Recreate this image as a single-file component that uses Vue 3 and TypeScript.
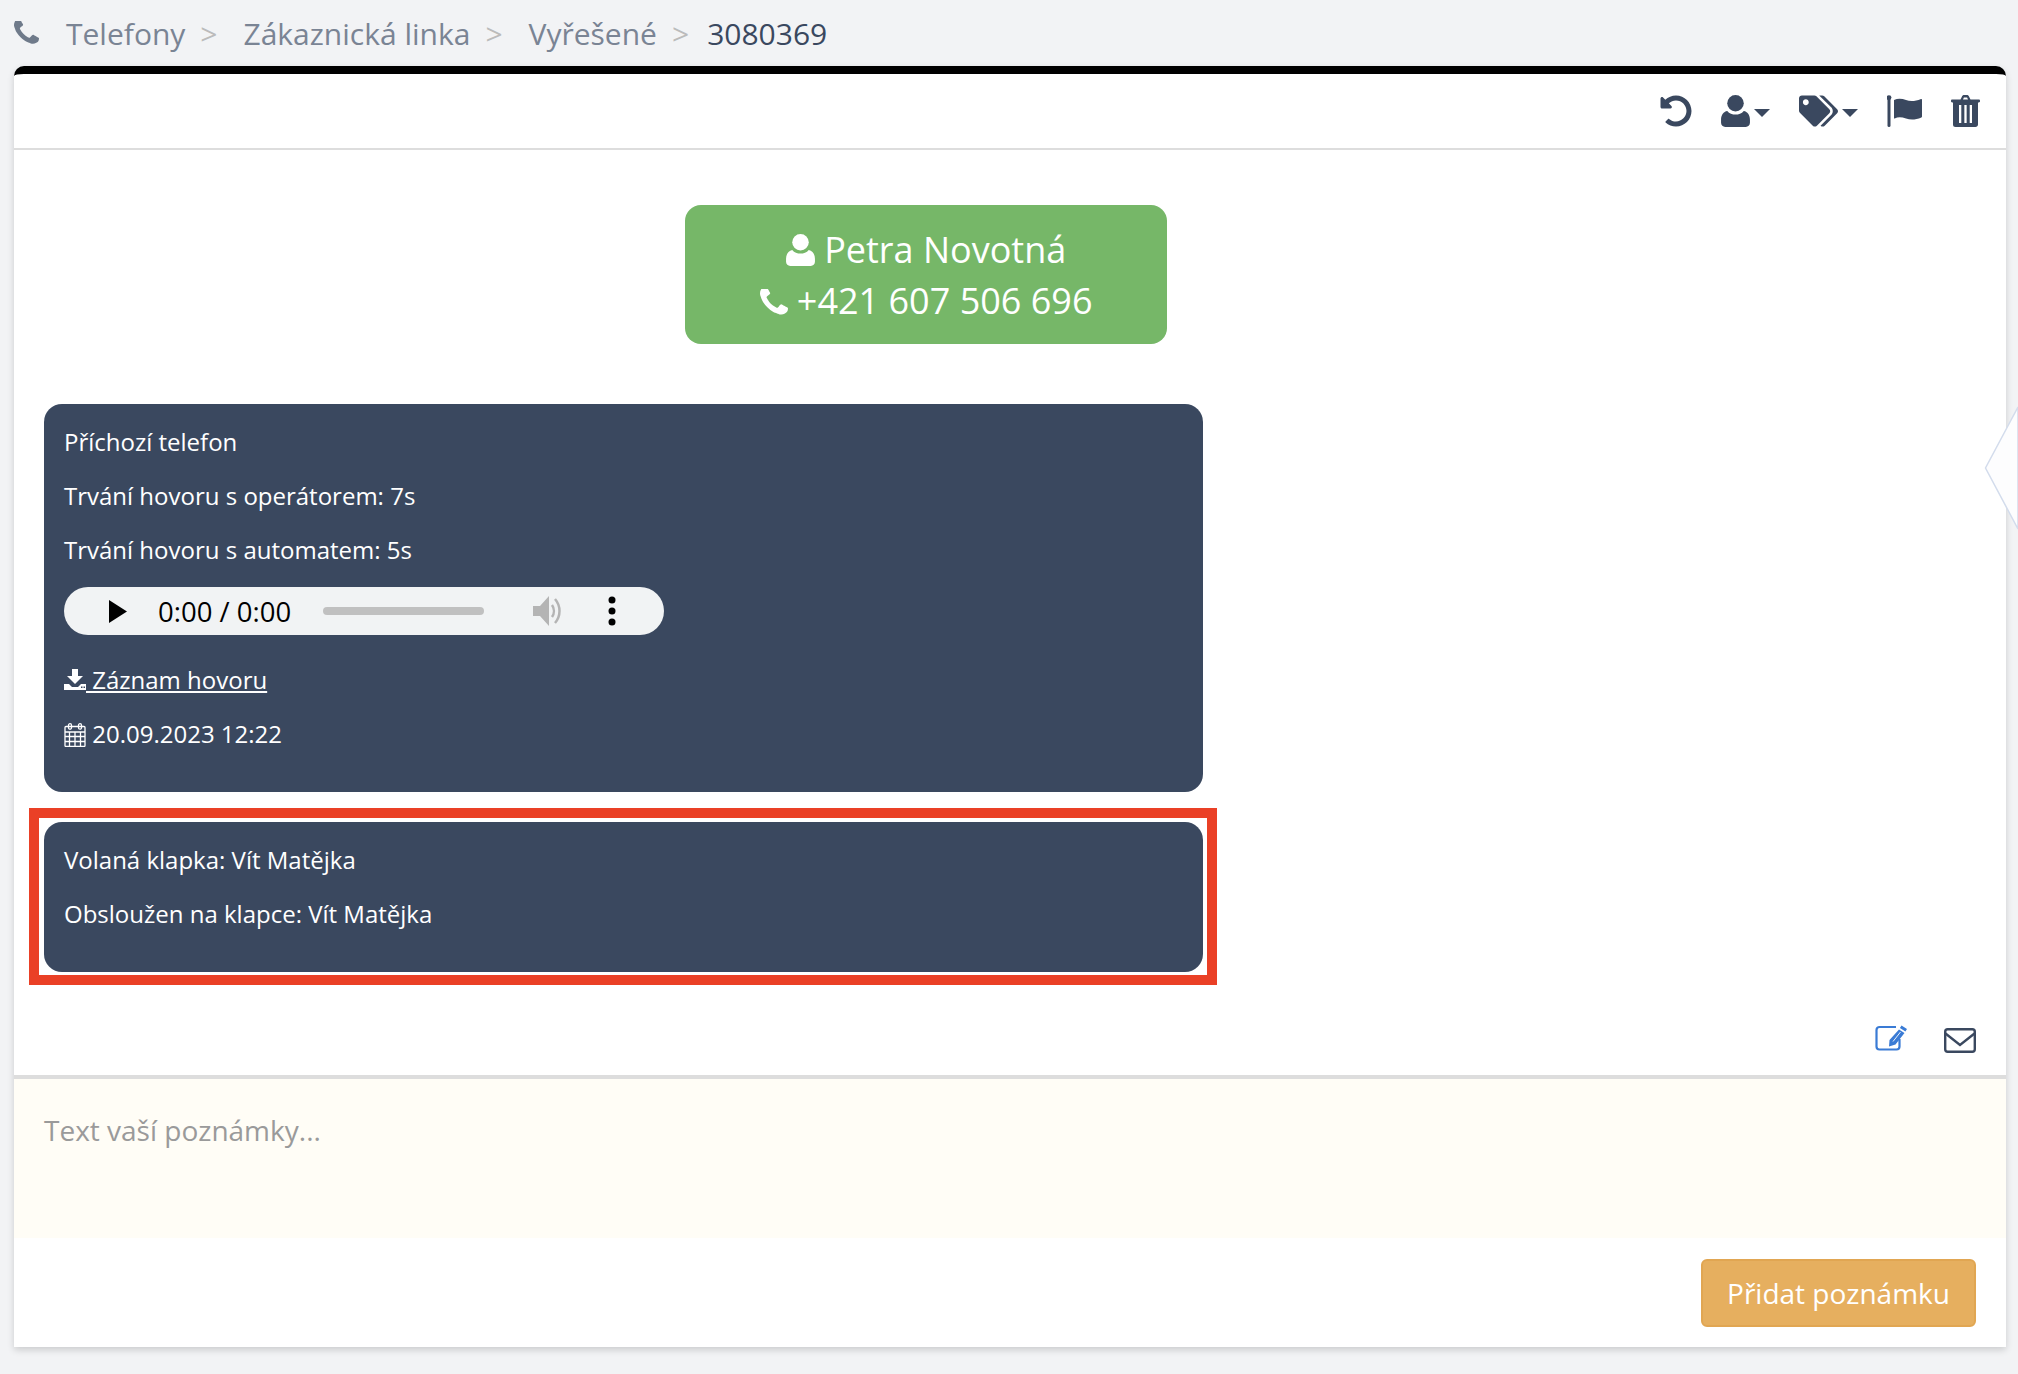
<script setup lang="ts">
const crumbs: string[] = ['Telefony', 'Zákaznická linka', 'Vyřešené']
const phone = 'M1600 1240q0 27-10 70.5t-21 68.5q-21 50-122 106-94 51-186 51-27 0-53-3.5t-57.5-12.5-47-14.5-55.5-20.5-49-18q-98-35-175-83-127-79-264-216t-216-264q-48-77-83-175-3-9-18-49t-20.5-55.5-14.5-47-12.5-57.5-3.5-53q0-92 51-186 56-101 106-122 25-11 68.5-21t70.5-10q14 0 21 3 18 6 53 76 11 19 30 54t35 63.5 31 53.5q3 4 17.5 25t21.5 35.5 7 28.5q0 20-28.5 50t-62 55-62 53-28.5 46q0 9 5 22.5t8.5 20.5 14 24 11.5 19q76 137 174 235t235 174q2 1 19 11.5t24 14 20.5 8.5 22.5 5q18 0 46-28.5t53-62 55-62 50-28.5q14 0 28.5 7t35.5 21.5 25 17.5q25 15 53.5 31t63.5 35 54 30q70 35 76 53 3 7 3 21z'
const body = 'M6 15.500C8 18 11 19 14 19s6-1 8-3.500C25.500 16 28 19.500 28 24v3c0 2.500-2 4-4 4H4c-2 0-4-1.500-4-4v-3c0-4.500 2.500-8 6-8.500z'
</script>

<template>
  <div class="page">
    <nav class="crumbs">
      <svg class="crumb-phone" viewBox="192 256 1408 1408"><path :d="phone" /></svg>
      <template v-for="c in crumbs" :key="c">
        <span class="crumb">{{ c }}</span>
        <span class="sep">&gt;</span>
      </template>
      <span class="crumb-last">3080369</span>
    </nav>

    <main class="card">
      <header class="toolbar">
        <svg class="ic-undo" viewBox="0 0 512 512"><path d="M255.545 8c-66.269.119-126.438 26.233-170.86 68.685L48.971 40.971C33.851 25.851 8 36.559 8 57.941V192c0 13.255 10.745 24 24 24h134.059c21.382 0 32.09-25.851 16.971-40.971l-41.75-41.75c30.864-28.899 70.801-44.907 113.23-45.273 92.398-.798 170.283 73.977 169.484 169.442C423.236 348.009 349.816 424 256 424c-41.127 0-79.997-14.678-110.63-41.556-4.743-4.161-11.906-3.908-16.368.553L89.34 422.659c-4.872 4.872-4.631 12.815.482 17.433C133.798 479.813 192.074 504 256 504c136.966 0 247.999-111.033 248-247.998C504.001 119.193 392.354 7.755 255.545 8z" /></svg>
        <div class="drop">
          <svg class="ic-user" viewBox="0 0 28 31"><circle cx="14" cy="8" r="8" /><path :d="body" /></svg>
          <span class="caret"></span>
        </div>
        <div class="drop">
          <svg class="ic-tags" viewBox="0 0 640 512"><path d="M497.941 225.941L286.059 14.059A48 48 0 0 0 252.118 0H48C21.49 0 0 21.49 0 48v204.118a48 48 0 0 0 14.059 33.941l211.882 211.882c18.744 18.745 49.136 18.746 67.882 0l204.118-204.118c18.745-18.745 18.745-49.137 0-67.882zM112 160c-26.51 0-48-21.49-48-48s21.49-48 48-48 48 21.49 48 48-21.49 48-48 48zm513.941 133.823L421.823 497.941c-18.745 18.745-49.137 18.745-67.882 0l-.36-.36L527.64 323.522c16.999-16.999 26.36-39.6 26.36-63.64s-9.362-46.641-26.36-63.64L331.397 0h48.721a48 48 0 0 1 33.941 14.059l211.882 211.882c18.745 18.745 18.745 49.137 0 67.882z" /></svg>
          <span class="caret"></span>
        </div>
        <svg class="ic-flag" viewBox="0 0 35 32">
          <rect x="0.5" y="2" width="3" height="30" rx="1.5" />
          <circle cx="2" cy="2.6" r="2.4" />
          <path d="M7 5c4-2 8-1.500 12 0s9 1.500 15-1c.6-.2 1 .1 1 .7V21.500c0 .5-.2.8-.6 1-6 2.500-11 2.500-15.400 1s-8-1.800-11.300 0c-.4.2-.7 0-.7-.5V5.600c0-.3 0-.5 0-.6z" />
        </svg>
        <svg class="ic-trash" viewBox="0 0 29 32">
          <path fill-rule="evenodd" d="M9.500 4.500 11 1.400C11.400.6 12.100 0 13 0h3c.9 0 1.600.6 2 1.400l1.500 3.100h8.300c.7 0 1.200.5 1.200 1.200v.6c0 .7-.5 1.200-1.200 1.200H27v22c0 1.400-1.100 2.500-2.500 2.500h-20A2.500 2.500 0 0 1 2 29.500v-22h-.8C.5 7.500 0 7 0 6.300v-.6c0-.7.5-1.200 1.200-1.200zM12 4.500h5l-.9-2h-3.200zM8 10h2.300v18H8zM13.350 10h2.300v18h-2.300zM18.700 10H21v18h-2.300z" />
        </svg>
      </header>

      <section class="thread">
        <div class="contact">
          <div><svg class="ct-user" viewBox="0 0 28 31"><circle cx="14" cy="8" r="8" /><path :d="body" /></svg> Petra Novotná</div>
          <div><svg class="ct-phone" viewBox="192 256 1408 1408"><path :d="phone" /></svg> +421 607 506 696</div>
        </div>

        <article class="msg">
          <p>Příchozí telefon</p>
          <p>Trvání hovoru s operátorem: 7s</p>
          <p>Trvání hovoru s automatem: 5s</p>
          <div class="player">
            <svg class="pl-play" viewBox="0 0 18 23"><path d="M0 0 18 11.500 0 23z" /></svg>
            <span class="pl-time">0:00 / 0:00</span>
            <span class="pl-bar"></span>
            <svg class="pl-vol" viewBox="0 0 29 30">
              <path fill="#b4b4b4" d="M0 10h7l9-10v30L7 20H0z" />
              <path fill="none" stroke="#b4b4b4" stroke-width="2.500" d="M19 9c2.500 3.500 2.500 8.500 0 12" />
              <path fill="none" stroke="#b4b4b4" stroke-width="2.500" d="M22 3c6 7 6 17 0 24" />
            </svg>
            <svg class="pl-more" viewBox="0 0 8 30">
              <circle cx="4" cy="4" r="3.500" /><circle cx="4" cy="15" r="3.500" /><circle cx="4" cy="26" r="3.500" />
            </svg>
          </div>
          <p>
            <a class="rec">
              <svg class="ic-dl" viewBox="0 0 22 21">
                <path d="M8 0h6v7h5l-8 8-8-8h5z" />
                <path fill-rule="evenodd" d="M0 15h5l3 3h6l3-3h5v6H0zM17 17.500h1.500v1.500H17zM19.500 17.500H21v1.500h-1.500z" />
              </svg>
              Záznam hovoru
            </a>
          </p>
          <p class="date">
            <svg class="ic-cal" viewBox="0 0 22 24">
              <g fill="none" stroke="#fff" stroke-width="1.300">
                <rect x="1" y="3.500" width="20" height="20" rx="1" />
                <path d="M1 9h20M1 13.500h20M1 18.500h20M5.500 9v14.500M11 9v14.500M16.500 9v14.500" />
                <rect x="4.500" y="0.700" width="3" height="5.500" rx="1.500" />
                <rect x="14.500" y="0.700" width="3" height="5.500" rx="1.500" />
              </g>
            </svg>
            20.09.2023 12:22
          </p>
        </article>

        <article class="msg second">
          <p>Volaná klapka: Vít Matějka</p>
          <p>Obsloužen na klapce: Vít Matějka</p>
          <div class="highlight"></div>
        </article>

        <div class="actions">
          <svg class="ic-edit" viewBox="0 0 32 26">
            <path fill="none" stroke="#3a7bd5" stroke-width="2.200" d="M21 2H4.500A3 3 0 0 0 1.500 5v16.500a3 3 0 0 0 3 3h17a3 3 0 0 0 3-3V14" />
            <path fill="#3a7bd5" d="M26.500.5 32 4l-1.600 2.600-5.500-3.500zM24 4.500l5.500 3.500-9 11.500-6.500 2 .5-6.500z" />
            <path fill="none" stroke="#fff" stroke-width="0.900" d="M25.500 7 18 16.500" />
          </svg>
          <svg class="ic-mail" viewBox="0 0 32 25">
            <rect x="1.200" y="1.200" width="29.600" height="22.600" rx="2.500" fill="none" stroke="#3a485f" stroke-width="2.400" />
            <path d="M1.500 5.500 16 17 30.500 5.500" fill="none" stroke="#3a485f" stroke-width="2.400" />
          </svg>
        </div>
      </section>

      <textarea class="note" placeholder="Text vaší poznámky..."></textarea>
      <footer class="foot">
        <button class="submit" type="button">Přidat poznámku</button>
      </footer>
    </main>

    <svg class="handle" viewBox="0 0 33 122">
      <path d="M33 0 0.500 61 33 122z" fill="#fdfdfe" stroke="#d3dcec" stroke-width="1.500" />
    </svg>
  </div>
</template>

<style>
html, body { margin: 0; background: #f2f3f5; overflow: hidden; }
</style>

<style scoped>
.page {
  position: relative;
  height: 1374px;
  padding: 0 12px 0 14px;
  box-sizing: border-box;
  font-family: "Open Sans", sans-serif;
  overflow: hidden;
}
.crumbs {
  height: 66px;
  display: flex;
  align-items: center;
  font-size: 30px;
  color: #7a8494;
}
.crumb-phone { width: 25px; height: 25px; fill: #6f7a8a; margin-right: 27px; }
.crumb { white-space: nowrap; }
.sep { color: #bbbbbb; margin: 0 26px 0 15px; }
.crumbs .sep:nth-of-type(6) { margin-right: 18px; }
.crumb-last { color: #3a485f; }
svg { display: block; }
.card {
  background: #fff;
  border-top: 8px solid #000;
  border-radius: 10px 10px 0 0;
  box-shadow: 0 3px 7px rgba(0, 0, 0, 0.16);
  height: 1281px;
  box-sizing: border-box;
  display: flex;
  flex-direction: column;
}
.toolbar {
  height: 76px;
  box-sizing: border-box;
  flex: none;
  border-bottom: 2px solid #dddddd;
  display: flex;
  justify-content: flex-end;
  align-items: center;
  gap: 29px;
  padding-right: 26px;
  fill: #3a485f;
}
.ic-undo { width: 32px; height: 32px; }
.ic-user { width: 29px; height: 32px; }
.ic-tags { width: 39px; height: 32px; }
.ic-flag { width: 35px; height: 32px; }
.ic-trash { width: 29px; height: 32px; }
.drop { display: flex; align-items: center; gap: 4px; }
.caret {
  width: 0;
  height: 0;
  border-left: 8px solid transparent;
  border-right: 8px solid transparent;
  border-top: 8px solid #3a485f;
  margin-top: 3px;
}
.thread {
  flex: none;
  height: 929px;
  box-sizing: border-box;
  padding: 55px 30px 0;
  border-bottom: 4px solid #dddddd;
}
.contact {
  width: 482px;
  height: 139px;
  margin-left: 641px;
  box-sizing: border-box;
  padding-top: 19px;
  background: #76b768;
  border-radius: 16px;
  color: #fff;
  text-align: center;
  font-size: 36px;
  line-height: 51px;
}
.ct-user, .ct-phone { display: inline-block; vertical-align: -3px; fill: #fff; }
.ct-user { width: 29px; height: 32px; }
.ct-phone { width: 28px; height: 28px; }
.msg {
  position: relative;
  width: 1159px;
  box-sizing: border-box;
  margin-top: 60px;
  padding: 21px 20px;
  background: #3a485f;
  border-radius: 18px;
  color: #fff;
  font-size: 24px;
  line-height: 34px;
}
.msg.second { margin-top: 30px; }
.msg p { margin: 0 0 20px; }
.highlight {
  position: absolute;
  inset: -14px -14px -13px -15px;
  border: 10px solid #ea4026;
  pointer-events: none;
}
.player {
  width: 600px;
  height: 48px;
  margin-bottom: 28px;
  display: flex;
  align-items: center;
  background: #f1f3f4;
  border-radius: 24px;
  padding-left: 45px;
  box-sizing: border-box;
  color: #000;
}
.pl-play { width: 18px; height: 23px; }
.pl-time { margin-left: 31px; font: 27.500px "Open Sans", sans-serif; white-space: nowrap; width: 165px; }
.pl-bar { width: 161px; height: 8px; background: #c0c0c0; border-radius: 4px; }
.pl-vol { width: 29px; height: 30px; margin-left: 49px; }
.pl-more { width: 8px; height: 30px; margin-left: 46px; }
.rec { color: #fff; text-decoration: underline; }
.ic-dl { display: inline-block; width: 22px; height: 21px; fill: #fff; vertical-align: -1px; }
.ic-cal { display: inline-block; width: 22px; height: 24px; vertical-align: -4px; }
.actions {
  margin-top: 53px;
  display: flex;
  justify-content: flex-end;
  gap: 37px;
}
.ic-edit { width: 32px; height: 26px; }
.ic-mail { width: 32px; height: 25px; margin-top: 3px; }
.note {
  display: block;
  flex: none;
  width: 100%;
  height: 159px;
  box-sizing: border-box;
  padding: 34px 30px 0;
  border: none;
  outline: none;
  resize: none;
  background: #fffdf6;
  font-family: "Open Sans", sans-serif;
  font-size: 28px;
  line-height: 34px;
}
.note::placeholder { color: #9a9a9a; opacity: 1; }
.foot {
  display: flex;
  justify-content: flex-end;
  padding: 21px 30px 0;
}
.submit {
  width: 275px;
  height: 68px;
  background: #e6af5f;
  border: 2px solid #e1a652;
  border-radius: 6px;
  color: #fff;
  font-family: "Open Sans", sans-serif;
  font-size: 28px;
  padding: 0;
}
.handle {
  position: absolute;
  left: 1985px;
  top: 407px;
  width: 33px;
  height: 122px;
  overflow: visible;
}
</style>
